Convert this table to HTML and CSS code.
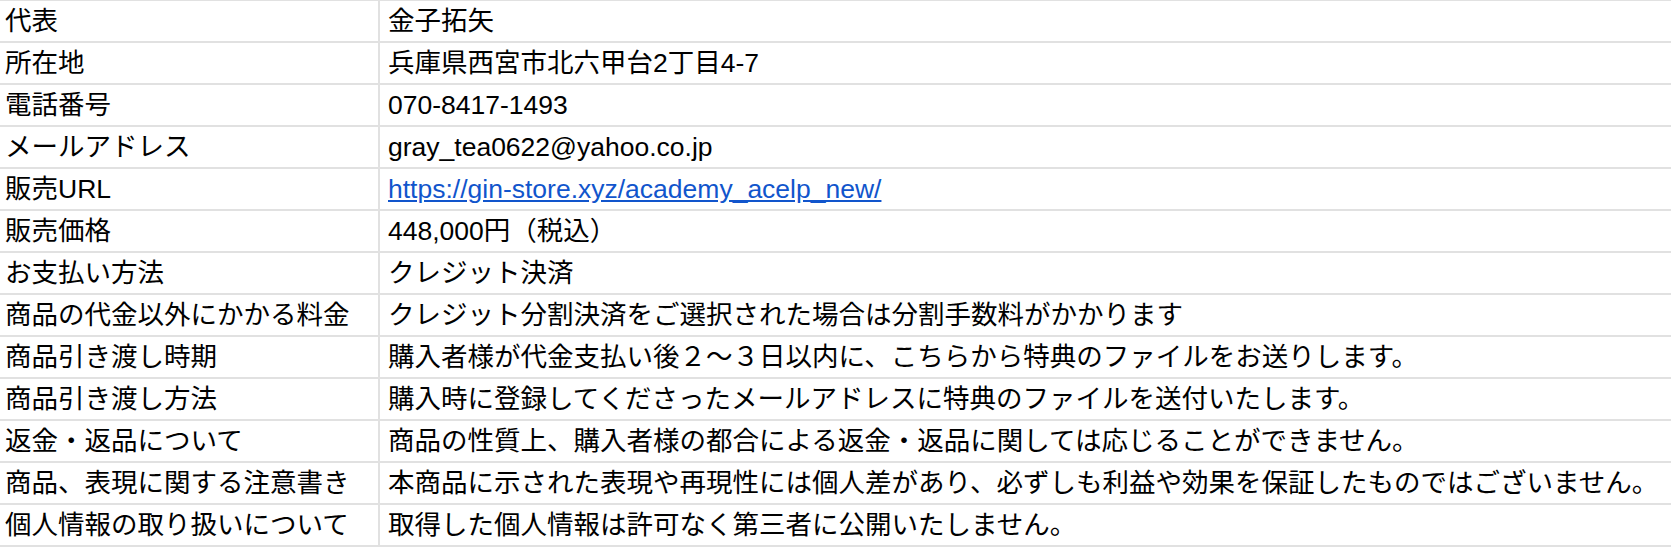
FILE: index.html
```html
<!DOCTYPE html>
<html lang="ja">
<head>
    <meta charset="UTF-8">
    <title>特定商取引法に基づく表記</title>
    <link rel="stylesheet" href="styles.css">
</head>
<body>
<table class="info">
    <tr>
        <td class="label">代表</td>
        <td class="value">金子拓矢</td>
    </tr>
    <tr>
        <td class="label">所在地</td>
        <td class="value">兵庫県西宮市北六甲台2丁目4-7</td>
    </tr>
    <tr>
        <td class="label">電話番号</td>
        <td class="value">070-8417-1493</td>
    </tr>
    <tr>
        <td class="label">メールアドレス</td>
        <td class="value">gray_tea0622@yahoo.co.jp</td>
    </tr>
    <tr>
        <td class="label">販売URL</td>
        <td class="value"><a href="javascript:;">https://gin-store.xyz/academy_acelp_new/</a></td>
    </tr>
    <tr>
        <td class="label">販売価格</td>
        <td class="value">448,000円（税込）</td>
    </tr>
    <tr>
        <td class="label">お支払い方法</td>
        <td class="value">クレジット決済</td>
    </tr>
    <tr>
        <td class="label">商品の代金以外にかかる料金</td>
        <td class="value">クレジット分割決済をご選択された場合は分割手数料がかかります</td>
    </tr>
    <tr>
        <td class="label">商品引き渡し時期</td>
        <td class="value">購入者様が代金支払い後２～３日以内に、こちらから特典のファイルをお送りします。</td>
    </tr>
    <tr>
        <td class="label">商品引き渡し方法</td>
        <td class="value">購入時に登録してくださったメールアドレスに特典のファイルを送付いたします。</td>
    </tr>
    <tr>
        <td class="label">返金・返品について</td>
        <td class="value">商品の性質上、購入者様の都合による返金・返品に関しては応じることができません。</td>
    </tr>
    <tr>
        <td class="label">商品、表現に関する注意書き</td>
        <td class="value">本商品に示された表現や再現性には個人差があり、必ずしも利益や効果を保証したものではございません。</td>
    </tr>
    <tr>
        <td class="label">個人情報の取り扱いについて</td>
        <td class="value">取得した個人情報は許可なく第三者に公開いたしません。</td>
    </tr>
</table>
</body>
</html>
```

FILE: styles.css
```css
* {
    margin: 0;
    padding: 0;
}

body {
    background-color: #fff;
    color: #000;
    font-family: "Liberation Sans", "Noto Sans CJK JP", sans-serif;
    font-size: 26.5px;
}

.info {
    width: 100%;
    table-layout: fixed;
    border-collapse: separate;
    border-spacing: 0;
}

.info td {
    height: 40px;
    line-height: 40px;
    white-space: nowrap;
    border-bottom: 2px solid #e1e1e1;
    vertical-align: middle;
}

.info tr:first-child td {
    border-top: 1px solid #e1e1e1;
}

.info .label {
    box-sizing: border-box;
    width: 380px;
    padding-left: 5px;
    border-right: 2px solid #e1e1e1;
}

.info .value {
    padding-left: 8px;
}

.info a {
    color: #1155cc;
    text-decoration: underline;
}
```
